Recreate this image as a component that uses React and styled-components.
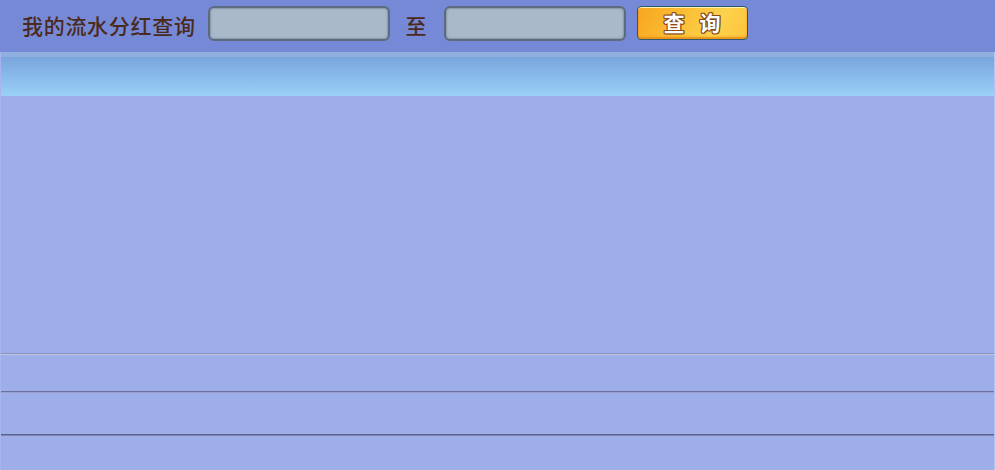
import React from 'react'
import styled, { createGlobalStyle } from 'styled-components';

const Global = createGlobalStyle`
html, body {
margin: 0;
padding: 0;
background: #9eaee8;
}
body {
font-family: "Noto Sans CJK SC", "Noto Sans", sans-serif;
}
`

const Page = styled.div`
width: 995px;
height: 470px;
display: flex;
flex-direction: column;
overflow: hidden;
`

const Toolbar = styled.div`
height: 52px;
background: #7689d6;
display: flex;
flex-direction: row;
align-items: center;
padding-left: 22px;
box-sizing: border-box;
`

const Title = styled.div`
font-size: 21px;
font-weight: 500;
color: #4a2a1c;
letter-spacing: 0.7px;
margin-right: 12px;
padding-bottom: 2px;
white-space: nowrap;
`

const Field = styled.input`
width: 182px;
height: 35px;
box-sizing: border-box;
border: 2px solid #5d6b7e;
border-radius: 6px;
background: #a9b9ca;
box-shadow: inset 0 0 0 1px #8d9cb0, inset 0 0 3px #7f8da0;
outline: none;
margin: 0 0 5px 0;
flex-shrink: 0;
`

const Sep = styled.div`
font-size: 21px;
font-weight: 500;
color: #4a2a1c;
margin: 0 17px 0 16px;
padding-bottom: 2px;
`

const Button = styled.button`
margin: 0 0 6px 11px;
width: 111px;
height: 34px;
box-sizing: border-box;
border: 1px solid #2c5a6c;
border-radius: 4px;
background: linear-gradient(120deg, #f7a51f 0%, #fbbe35 40%, #fdd24c 70%, #fdc43c 100%);
box-shadow: inset 0 1px 0 #fff2b0, inset 0 -2px 2px #e8901a;
display: flex;
align-items: center;
justify-content: center;
gap: 15px;
padding: 0 0 2px 0;
font-family: "Noto Sans CJK SC", sans-serif;
font-weight: 700;
font-size: 21px;
color: #fff;
text-shadow: 1px 0 0 #8a4a18, -1px 0 0 #8a4a18, 0 1px 0 #8a4a18, 0 -1px 0 #8a4a18, 1px 1px 0 #8a4a18, -1px -1px 0 #8a4a18, 1px -1px 0 #8a4a18, -1px 1px 0 #8a4a18;
cursor: pointer;
flex-shrink: 0;
`

const Table = styled.div`
flex: 1;
display: flex;
flex-direction: column;
border-left: 1px solid #a9b3ee;
border-right: 1px solid #b4c2f2;
`

const Band = styled.div`
height: 5px;
background: #8fb0df;
`

const Header = styled.div`
height: 39px;
background: linear-gradient(to bottom, #79a4dd, #9ad1f7);
`

const Body = styled.div`
height: 257px;
background: #9eaee8;
`

const Row = styled.div`
height: ${p => p.h}px;
background: #9eaee8;
border-top: 1px solid ${p => p.line};
box-shadow: inset 0 1px 0 ${p => p.glow};
`

const App = () => {
    return (
        <Page>
            <Global />
            <Toolbar>
                <Title>我的流水分红查询</Title>
                <Field />
                <Sep>至</Sep>
                <Field />
                <Button>
                    <span>查</span>
                    <span>询</span>
                </Button>
            </Toolbar>
            <Table>
                <Band />
                <Header />
                <Body />
                <Row h={37} line="#8a90bd" glow="#c3c6d8" />
                <Row h={42} line="#6a70a0" glow="#9aa0cc" />
                <Row h={35} line="#585e8e" glow="#7c84b8" />
            </Table>
        </Page>
    );
};

export default App;
